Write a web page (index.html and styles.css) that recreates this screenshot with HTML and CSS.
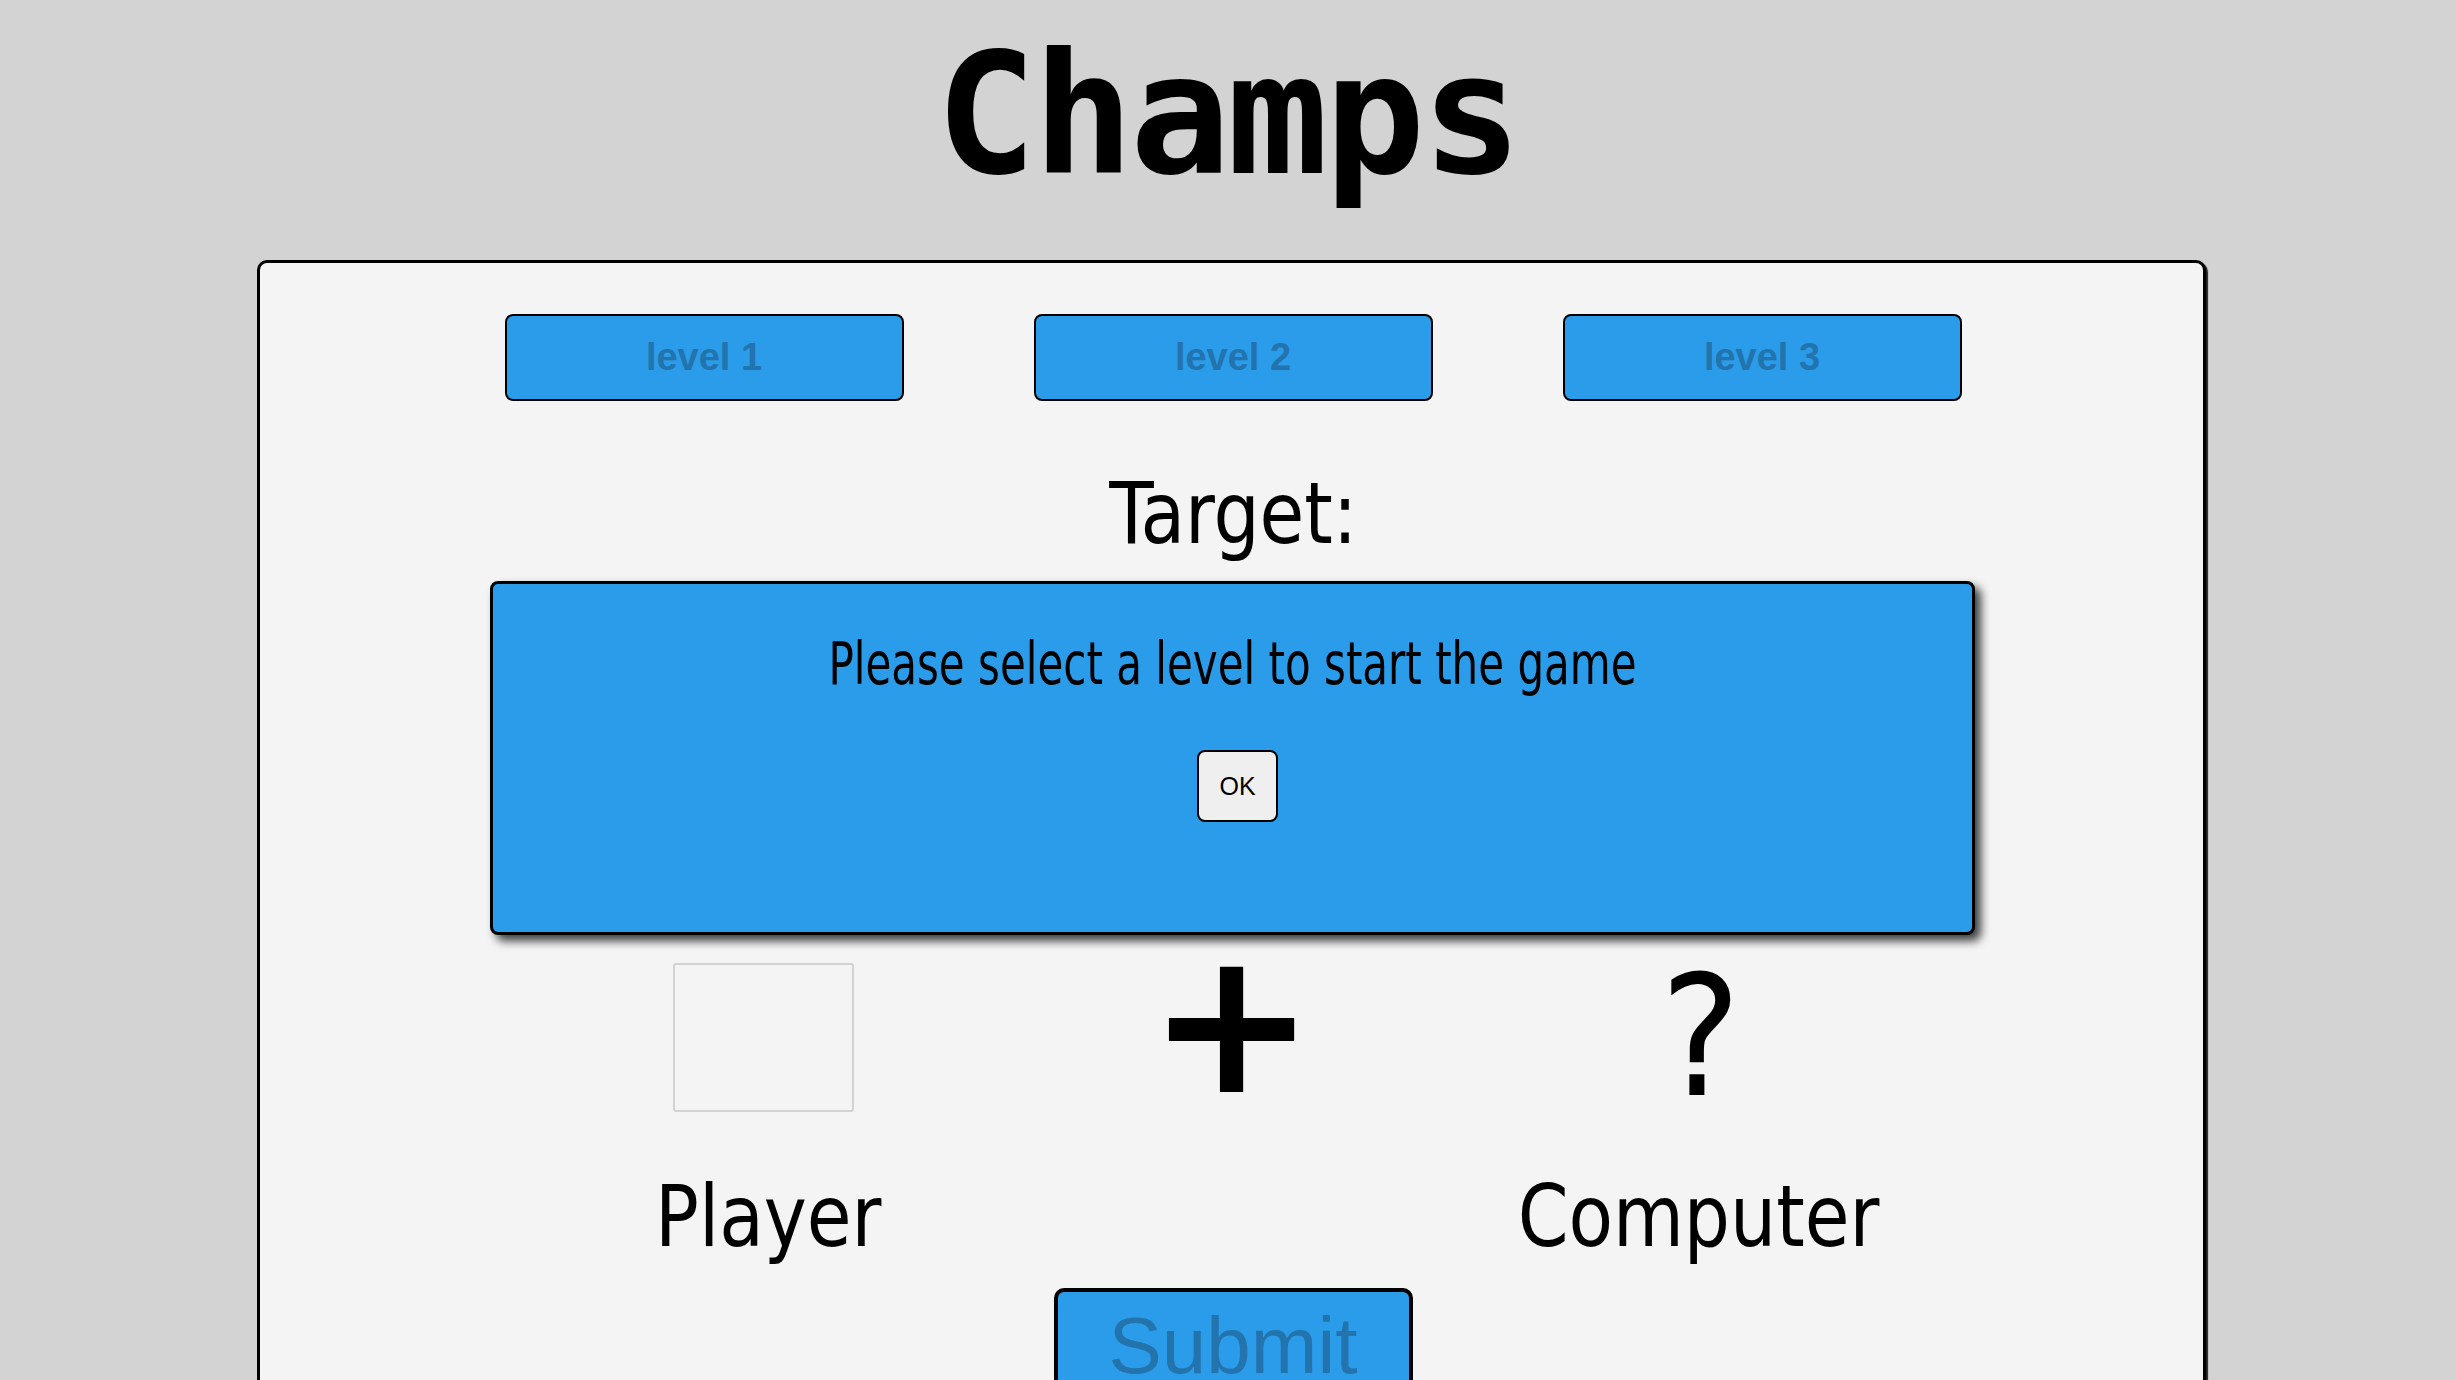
FILE: index.html
```html
<!DOCTYPE html>
<html lang="en">
<head>
<meta charset="utf-8">
<title>Champs</title>
<link rel="stylesheet" href="styles.css">
</head>
<body>
  <h1 class="title">Champs</h1>
  <main class="board">
    <div class="levels">
      <button class="level-btn">level 1</button>
      <button class="level-btn">level 2</button>
      <button class="level-btn">level 3</button>
    </div>
    <h2 class="target">Target:</h2>
    <div class="play">
      <div class="cell"><div class="player-box"></div></div>
      <div class="cell"><span class="plus">+</span></div>
      <div class="cell"><span class="question">?</span></div>
      <div class="label label-player">Player</div>
      <div class="label"></div>
      <div class="label">Computer</div>
    </div>
    <div class="submit-row">
      <button class="submit-btn">Submit</button>
    </div>
    <div class="modal">
      <p class="modal-text">Please select a level to start the game</p>
      <button class="ok-btn">OK</button>
    </div>
  </main>
</body>
</html>
```
FILE: styles.css
```css
html, body {
  margin: 0;
  padding: 0;
}

body {
  background: #d3d3d3;
  height: 1380px;
  overflow: hidden;
  font-family: "Liberation Sans", Arial, sans-serif;
}

.title {
  margin: 31px 0 61px;
  font-family: "DejaVu Sans Mono", monospace;
  font-weight: bold;
  font-size: 168px;
  line-height: 168px;
  letter-spacing: -4px;
  text-align: center;
  color: #000;
  padding-right: 2px;
}

.board {
  position: relative;
  box-sizing: border-box;
  margin-left: 257px;
  width: 1949px;
  height: 1300px;
  background: #f4f4f4;
  border: 3px solid #000;
  border-radius: 10px;
  box-shadow: 2px 2px 1px rgba(0, 0, 0, 0.85);
  padding-top: 51px;
}

.levels {
  display: flex;
  justify-content: center;
  gap: 130px;
  padding-left: 3px;
}

.level-btn {
  box-sizing: border-box;
  width: 399px;
  height: 87px;
  background: #2a9ce9;
  border: 2px solid #000;
  border-radius: 8px;
  font-family: "Liberation Sans", Arial, sans-serif;
  font-weight: bold;
  font-size: 38px;
  color: #2373ad;
  padding: 0;
}

.target,
.label,
.question,
.modal-text {
  font-family: "Liberation Sans Narrow", "DejaVu Sans Condensed", "Liberation Sans", sans-serif;
}

.target {
  margin: 67px 0 0;
  font-weight: normal;
  font-size: 86px;
  line-height: 90px;
  text-align: center;
  padding-left: 4px;
  transform: scaleX(0.94);
}

.play {
  margin-top: 405px;
  display: grid;
  grid-template-columns: repeat(3, 467px);
  justify-content: center;
}

.cell {
  height: 149px;
  display: flex;
  justify-content: center;
}

.player-box {
  box-sizing: border-box;
  width: 181px;
  height: 149px;
  border: 2px solid #d2d2d2;
  border-radius: 3px;
  margin-right: 3px;
}

.plus {
  font-family: "DejaVu Sans", sans-serif;
  font-size: 200px;
  line-height: 149px;
  font-weight: bold;
  margin-top: -15px;
}

.question {
  font-size: 168px;
  line-height: 149px;
  margin-left: 4px;
}

.label {
  margin-top: 59px;
  font-size: 86px;
  line-height: 90px;
  text-align: center;
  transform: scaleX(0.94);
}

.label-player {
  padding-left: 8px;
}

.submit-row {
  margin-top: 27px;
  display: flex;
  justify-content: center;
}

.submit-btn {
  box-sizing: border-box;
  width: 359px;
  background: #2a9ce9;
  border: 4px solid #000;
  border-radius: 10px;
  font-family: "Liberation Sans", Arial, sans-serif;
  font-size: 80px;
  color: #2373ad;
  padding: 8px 0 16px;
  margin-left: 3px;
}

.modal {
  position: absolute;
  left: 230px;
  top: 318px;
  box-sizing: border-box;
  width: 1485px;
  height: 354px;
  background: #2a9ce9;
  border: 3px solid #000;
  border-radius: 8px;
  box-shadow: 6px 6px 10px rgba(0, 0, 0, 0.75);
  padding-top: 51px;
  text-align: center;
}

.modal-text {
  margin: 0;
  font-size: 58px;
  line-height: 58px;
  color: #000;
  transform: scaleX(0.805);
}

.ok-btn {
  margin-top: 57px;
  margin-left: 10px;
  box-sizing: border-box;
  width: 81px;
  height: 72px;
  background: #efefef;
  border: 2px solid #000;
  border-radius: 8px;
  font-family: "Liberation Sans", Arial, sans-serif;
  font-size: 25px;
  color: #000;
  padding: 0;
}
```
